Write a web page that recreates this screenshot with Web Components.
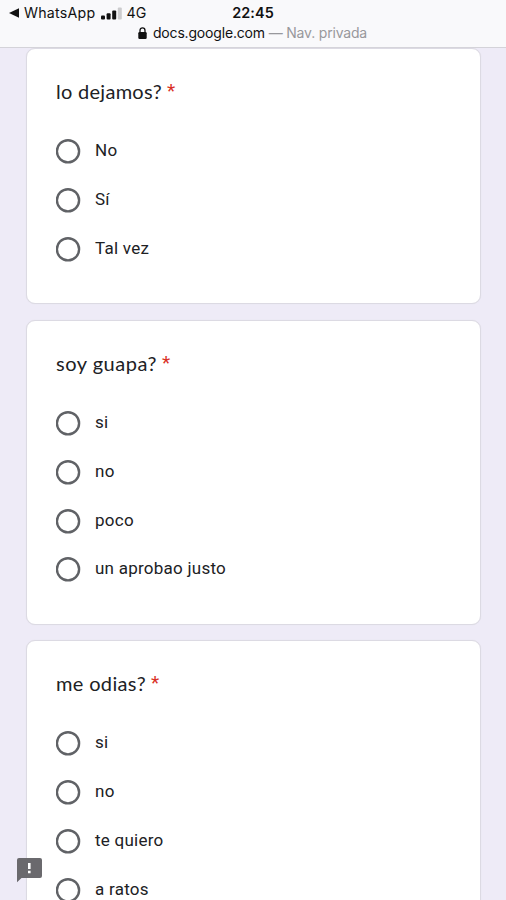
<!DOCTYPE html>
<html lang="es">
<head>
<meta charset="utf-8">
<title>Formulario</title>
<style>
html,body{margin:0;height:900px;overflow:hidden}
body{background:#eeebf7;font-family:Roboto,"Liberation Sans",sans-serif;color:#202124}
</style>
</head>
<body>
<form-page>
  <browser-bar slot="bar"></browser-bar>
  <form-question label="lo dejamos?" style="--ls:.28px"><radio-option>No</radio-option><radio-option>Sí</radio-option><radio-option>Tal vez</radio-option></form-question>
  <form-question label="soy guapa?" style="--ls:.52px"><radio-option>si</radio-option><radio-option>no</radio-option><radio-option>poco</radio-option><radio-option>un aprobao justo</radio-option></form-question>
  <form-question label="me odias?" style="--ls:.35px"><radio-option>si</radio-option><radio-option>no</radio-option><radio-option>te quiero</radio-option><radio-option>a ratos</radio-option></form-question>
  <feedback-button slot="overlay"></feedback-button>
</form-page>
<script>
function define(name, html) {
  customElements.define(name, class extends HTMLElement {
    connectedCallback() {
      if (this.shadowRoot) return;
      this.attachShadow({mode: 'open'}).innerHTML = html;
      const label = this.shadowRoot.querySelector('.label');
      if (label) label.textContent = this.getAttribute('label');
    }
  });
}
define('form-page', `<style>
:host{display:block;position:relative;height:900px;overflow:hidden}
main{display:flex;flex-direction:column;gap:15.5px;padding:0 25.5px}
</style><slot name="bar"></slot><main><slot></slot></main><slot name="overlay"></slot>`);

define('browser-bar', `<style>
:host{display:block;box-sizing:border-box;height:48px;background:#f9f9fb;border-bottom:1px solid #d4d3d9;font-family:Inter,sans-serif;color:#111;padding-top:3px}
.status{display:grid;grid-template-columns:1fr auto 1fr;height:20px;align-items:center;line-height:20px}
.left{display:flex;align-items:center;padding-left:9px;font-size:14.2px}
.app{margin-left:5px;letter-spacing:.25px}
.bars{margin:0 5px 0 5px}
.time{font-size:14.4px;font-weight:600;letter-spacing:.1px}
.url{display:flex;align-items:center;justify-content:center;height:20px;line-height:20px;font-size:14px;letter-spacing:-.18px;white-space:pre}
.url svg{margin-right:6px}
.url i{font-style:normal;color:#98989c;margin-right:1px}
</style>
<div class="status"><div class="left"><svg width="10" height="10" viewBox="0 0 10 10"><path d="M0 5 10 .3V9.7Z" fill="#111"/></svg><span class="app">WhatsApp</span>
<svg class="bars" width="21" height="13" viewBox="0 0 21 13"><g fill="#111"><rect y="8.5" width="4" height="4" rx="1"/><rect x="5.6" y="6.3" width="4" height="6.2" rx="1"/><rect x="11.2" y="3.4" width="4" height="9.1" rx="1"/></g><rect x="16.8" y=".5" width="4" height="12" rx="1" fill="#ccccce"/></svg><span>4G</span></div><span class="time">22:45</span><span></span></div>
<div class="url"><svg width="9" height="12" viewBox="0 0 9 12"><rect x=".3" y="5" width="8.4" height="7" rx="1.2" fill="#111"/><path d="M2 5.6V3.4a2.5 2.6 0 0 1 5 0v2.2" fill="none" stroke="#111" stroke-width="1.3"/></svg><span>docs.google.com</span><i> — Nav. privada</i></div>`);

define('form-question', `<style>
:host{display:block;box-sizing:border-box;background:#fff;border:1px solid #dcdae3;box-shadow:0 0 1px #dcdae3;border-radius:9px;padding:28px 29.5px 41.3px}
h2{display:flex;margin:0 0 34.3px;font:400 20px/29px Lato,sans-serif;height:28px;letter-spacing:var(--ls)}
b{font:400 19px/28px Roboto,sans-serif;color:#d93025;margin-left:5px;letter-spacing:0}
.options{display:flex;flex-direction:column}
</style><h2><span class="label"></span><b>*</b></h2><div class="options"><slot></slot></div>`);

define('radio-option', `<style>
:host{display:flex;align-items:flex-start;height:48.8px;font-size:17px;letter-spacing:.25px;line-height:23px}
:host(:last-child){height:25px}
svg{width:25px;height:25px;margin-right:14px;flex:none}
</style><svg viewBox="0 0 25 25"><circle cx="12" cy="12.3" r="11.1" fill="none" stroke="#606266" stroke-width="2.4"/></svg><span><slot></slot></span>`);

define('feedback-button', `<style>
:host{position:absolute;left:17px;top:858px;line-height:0}
</style><svg width="25" height="25" viewBox="0 0 25 25"><path d="M2 0H23A2 2 0 0 1 25 2V18A2 2 0 0 1 23 20H4.5L0 24.3V2A2 2 0 0 1 2 0Z" fill="#6a696d"/><path d="M11 5h2.6v6H11zM11 12.8h2.6v2.4H11z" fill="#fff"/></svg>`);
</script>
</body>
</html>
